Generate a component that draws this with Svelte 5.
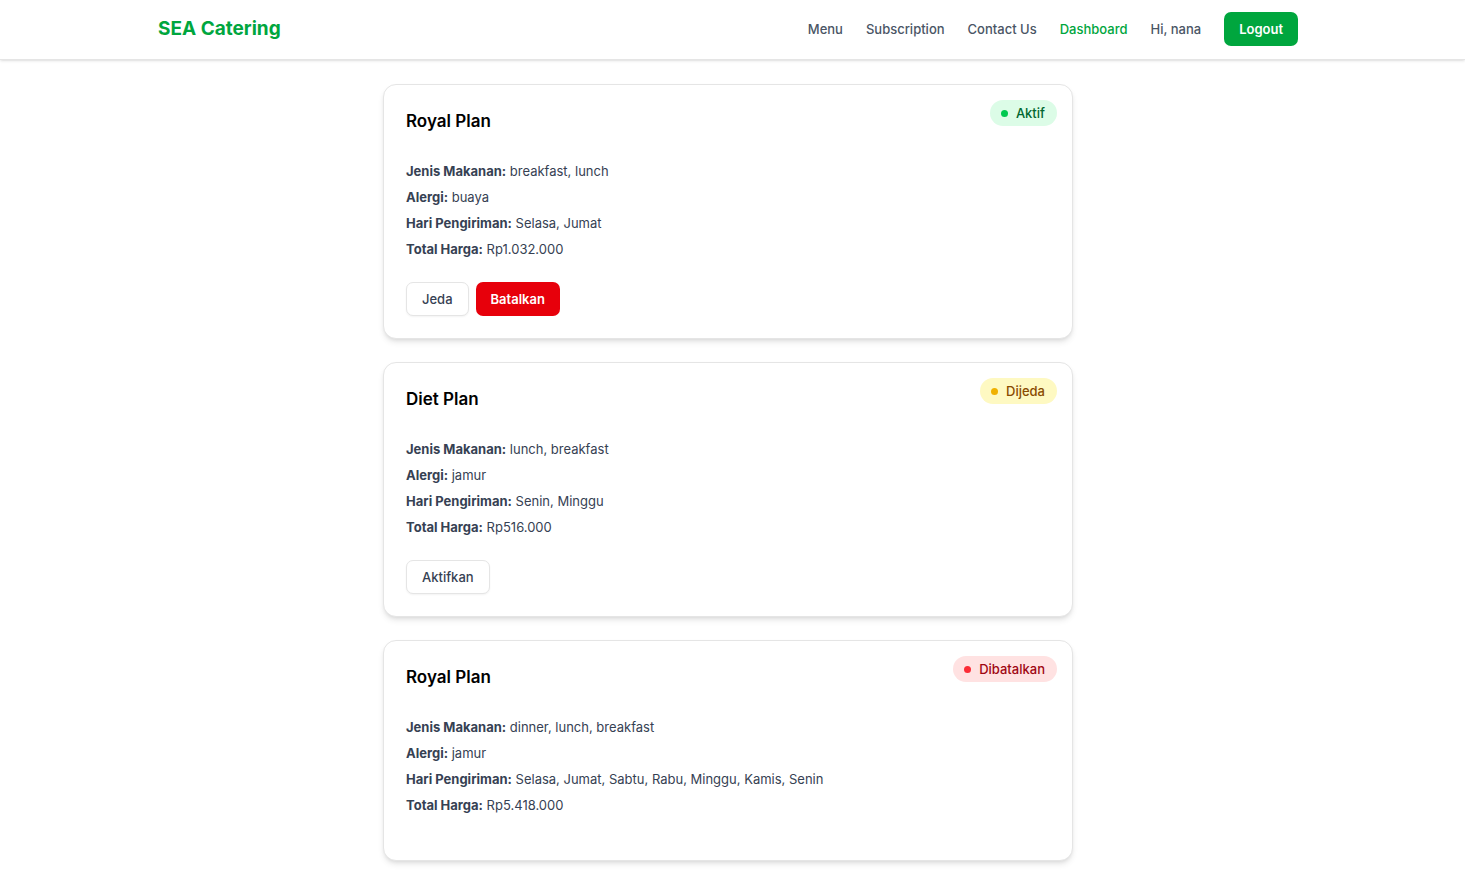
<script>
  const links = ['Menu', 'Subscription', 'Contact Us', 'Dashboard'];
  const plans = [
    { name: 'Royal Plan', meals: 'breakfast, lunch', allergy: 'buaya', days: 'Selasa, Jumat', total: 'Rp1.032.000', status: 'Aktif', tone: 'active' },
    { name: 'Diet Plan', meals: 'lunch, breakfast', allergy: 'jamur', days: 'Senin, Minggu', total: 'Rp516.000', status: 'Dijeda', tone: 'paused' },
    { name: 'Royal Plan', meals: 'dinner, lunch, breakfast', allergy: 'jamur', days: 'Selasa, Jumat, Sabtu, Rabu, Minggu, Kamis, Senin', total: 'Rp5.418.000', status: 'Dibatalkan', tone: 'cancelled' }
  ];
</script>

<header>
  <div class="bar">
    <a class="brand" href="#home">SEA Catering</a>
    <nav>
      {#each links as link}
        <a href="#{link}" class:current={link === 'Dashboard'}>{link}</a>
      {/each}
      <span>Hi, nana</span>
      <button class="btn green">Logout</button>
    </nav>
  </div>
</header>

<main>
  {#each plans as plan}
    <article>
      <div class="badge {plan.tone}"><i></i>{plan.status}</div>
      <h2>{plan.name}</h2>
      <div class="details">
        <p><strong>Jenis Makanan:</strong> {plan.meals}</p>
        <p><strong>Alergi:</strong> {plan.allergy}</p>
        <p><strong>Hari Pengiriman:</strong> {plan.days}</p>
        <p><strong>Total Harga:</strong> {plan.total}</p>
      </div>
      {#if plan.tone !== 'cancelled'}
        <div class="actions">
          {#if plan.tone === 'active'}
            <button class="btn outline">Jeda</button>
            <button class="btn red">Batalkan</button>
          {:else}
            <button class="btn outline">Aktifkan</button>
          {/if}
        </div>
      {/if}
    </article>
  {/each}
</main>

<style>
  :global(body) {
    margin: 0;
    background: #fff;
    color: #000;
    font-family: Inter, sans-serif;
    font-size: 13px;
    line-height: 19px;
  }
  header {
    padding-right: 9px;
    background: #fff;
    border-bottom: 1px solid #e5e5e5;
    box-shadow: 0 1px 3px rgb(0 0 0 / 0.1), 0 1px 2px -1px rgb(0 0 0 / 0.1);
  }
  .bar {
    box-sizing: border-box;
    max-width: 1184px;
    margin: 0 auto;
    padding: 12px 22px 13px;
    display: flex;
    justify-content: space-between;
    align-items: center;
  }
  a { text-decoration: none; color: inherit; }
  .brand {
    font-size: 19px;
    line-height: 26px;
    font-weight: 700;
    color: #00a63e;
  }
  nav {
    display: flex;
    align-items: center;
    gap: 23px;
    font-weight: 500;
    color: #4a5565;
  }
  nav .current { color: #00a63e; }
  .btn {
    box-sizing: border-box;
    height: 34px;
    padding: 0 15px;
    border: 0;
    border-radius: 7px;
    font: 500 13px/19px Inter, sans-serif;
    color: #fff;
    cursor: pointer;
  }
  .green { background: #00a63e; font-weight: 600; }
  .red { background: #e7000b; font-weight: 600; }
  .outline {
    background: #fff;
    color: #364153;
    border: 1px solid #e5e5e5;
    box-shadow: 0 1px 2px rgb(0 0 0 / 0.05);
  }
  main {
    max-width: 690px;
    margin: 0 auto;
    padding: 24px 9px 12px 0;
    display: grid;
    gap: 23px;
  }
  article {
    position: relative;
    padding: 22px;
    border: 1px solid #e5e5e5;
    border-radius: 13px;
    background: #fff;
    box-shadow: 0 4px 6px -1px rgb(0 0 0 / 0.1), 0 2px 4px -2px rgb(0 0 0 / 0.1);
  }
  h2 {
    margin: 0 0 24px;
    font-size: 17px;
    line-height: 28px;
    font-weight: 600;
  }
  .details {
    display: grid;
    gap: 7px;
    padding: 3px 0 23px;
    color: #364153;
  }
  p { margin: 0; }
  strong { font-weight: 700; }
  .actions { display: flex; gap: 7px; }
  .badge {
    position: absolute;
    top: 15px;
    right: 15px;
    display: flex;
    align-items: center;
    gap: 8px;
    padding: 4px 12px 4px 11px;
    border-radius: 13px;
    font-weight: 500;
    line-height: 18px;
  }
  .badge i { width: 7px; height: 7px; border-radius: 50%; }
  .active { background: #dcfce7; color: #016630; }
  .active i { background: #00c950; }
  .paused { background: #fef9c2; color: #894b00; }
  .paused i { background: #f0b100; }
  .cancelled { background: #ffe2e2; color: #9f0712; }
  .cancelled i { background: #fb2c36; }
</style>
